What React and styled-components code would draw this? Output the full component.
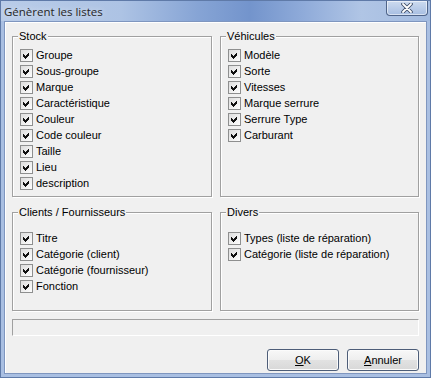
import React from 'react';
import styled, { createGlobalStyle } from 'styled-components';

const GlobalStyle = createGlobalStyle`
  html, body {
    margin: 0;
    padding: 0;
    background: #f0f0f0;
  }
  body {
    font-family: "Liberation Sans", Arial, sans-serif;
  }
`;

const Window = styled.div`
  width: 431px;
  height: 378px;
  box-sizing: border-box;
  display: flex;
  flex-direction: column;
  background: #a9bfe2;
  border: 1px solid #5f7aa8;
  overflow: hidden;
`;

const TitleBar = styled.div`
  height: 20px;
  flex: none;
  display: flex;
  align-items: center;
  justify-content: space-between;
  padding-left: 3px;
  background: linear-gradient(
    90deg,
    #b9cce8 0%,
    #adc3e4 28%,
    #86a4d5 46%,
    #7394cc 58%,
    #8eaad9 70%,
    #b0c5e5 84%,
    #a3bbe0 100%
  );
`;

const Title = styled.span`
  font-family: "Open Sans", "Noto Sans", sans-serif;
  font-size: 11.5px;
  color: #262626;
  text-shadow: 0 0 6px rgba(255, 255, 255, 0.7);
  margin-top: 1px;
`;

const CloseButton = styled.div`
  width: 42px;
  height: 15px;
  margin-top: -6px;
  margin-right: 2px;
  box-sizing: border-box;
  border: 1px solid #4f6489;
  border-top: none;
  border-radius: 0 0 4px 4px;
  background: linear-gradient(#cddbef, #a7bee2);
  box-shadow: inset 0 0 0 1px rgba(255, 255, 255, 0.55);
  display: flex;
  align-items: flex-end;
  justify-content: center;
  padding-bottom: 2px;
`;

const Client = styled.div`
  flex: 1;
  margin: 0 3px 3px 3px;
  box-sizing: border-box;
  background: #f0f0f0;
  border: 1px solid #7f96bf;
  box-shadow: inset 1px 1px 0 #ffffff;
  padding: 8px 7px 2px 7px;
  display: flex;
  flex-direction: column;
`;

const GroupGrid = styled.div`
  display: grid;
  grid-template-columns: 200px 199px;
  column-gap: 8px;
  row-gap: 9px;
`;

const Group = styled.fieldset`
  margin: 0;
  min-width: 0;
  box-sizing: border-box;
  height: ${(p) => p.$height}px;
  padding: ${(p) => p.$padTop}px 6px 0 7px;
  border: 1px solid #a0a0a0;
  box-shadow: inset 1px 1px 0 #ffffff, 1px 1px 0 #ffffff;
`;

const Legend = styled.legend`
  font-size: 11px;
  line-height: 13px;
  color: #000;
  padding: 0 1px;
  margin-left: -2px;
  background: #f0f0f0;
`;

const Row = styled.label`
  display: flex;
  align-items: center;
  height: 16px;
  gap: 3px;
  font-size: 11px;
  color: #000;
  white-space: nowrap;
`;

const StatusPanel = styled.div`
  margin-top: 8px;
  height: 17px;
  box-sizing: border-box;
  border-top: 1px solid #a0a0a0;
  border-left: 1px solid #a0a0a0;
  border-right: 1px solid #ffffff;
  border-bottom: 1px solid #ffffff;
`;

const ButtonBar = styled.div`
  margin-top: auto;
  display: flex;
  justify-content: flex-end;
  gap: 8px;
`;

const Button = styled.button`
  width: 72px;
  height: 22px;
  box-sizing: border-box;
  font-family: "Liberation Sans", Arial, sans-serif;
  font-size: 11px;
  color: #000;
  border: 1px solid #4d5d78;
  border-radius: 3px;
  background: linear-gradient(#f8f8f8 0%, #eeeeee 50%, #e2e2e2 51%, #d8d8d8 100%);
  box-shadow: inset 0 0 0 1px #fbfbfb;
  padding: 0;
  u {
    text-decoration: underline;
  }
`;

function CheckMark() {
  return (
    <svg width="13" height="13" viewBox="0 0 13 13" style={{ flex: 'none' }}>
      <defs>
        <linearGradient id="cbg" x1="0" y1="0" x2="1" y2="1">
          <stop offset="0" stopColor="#dcdcdc" />
          <stop offset="1" stopColor="#ffffff" />
        </linearGradient>
      </defs>
      <rect x="0.5" y="0.5" width="12" height="12" fill="url(#cbg)" stroke="#8e8f8f" />
      <path
        d="M3 5 L5 7 L9 3 L9 6 L5 10 L3 8 Z"
        fill="#111"
        shapeRendering="crispEdges"
      />
    </svg>
  );
}

function CloseGlyph() {
  return (
    <svg width="14" height="10" viewBox="0 0 14 10">
      <path
        d="M3 1 L11 9 M11 1 L3 9"
        stroke="#3d4c66"
        strokeWidth="3.6"
        fill="none"
        strokeLinecap="round"
      />
      <path
        d="M3 1 L11 9 M11 1 L3 9"
        stroke="#ffffff"
        strokeWidth="1.8"
        fill="none"
        strokeLinecap="round"
      />
    </svg>
  );
}

const groups = [
  {
    title: 'Stock',
    height: 167,
    padTop: 4,
    items: ['Groupe', 'Sous-groupe', 'Marque', 'Caractéristique', 'Couleur', 'Code couleur', 'Taille', 'Lieu', 'description'],
  },
  {
    title: 'Véhicules',
    height: 167,
    padTop: 4,
    items: ['Modèle', 'Sorte', 'Vitesses', 'Marque serrure', 'Serrure Type', 'Carburant'],
  },
  {
    title: 'Clients / Fournisseurs',
    height: 105,
    padTop: 11,
    items: ['Titre', 'Catégorie (client)', 'Catégorie (fournisseur)', 'Fonction'],
  },
  {
    title: 'Divers',
    height: 105,
    padTop: 11,
    items: ['Types (liste de réparation)', 'Catégorie (liste de réparation)'],
  },
];

export default function App() {
  return (
    <>
      <GlobalStyle />
      <Window>
        <TitleBar>
          <Title>Génèrent les listes</Title>
          <CloseButton>
            <CloseGlyph />
          </CloseButton>
        </TitleBar>
        <Client>
          <GroupGrid>
            {groups.map((g) => (
              <Group key={g.title} $height={g.height} $padTop={g.padTop}>
                <Legend>{g.title}</Legend>
                {g.items.map((item) => (
                  <Row key={item}>
                    <CheckMark />
                    {item}
                  </Row>
                ))}
              </Group>
            ))}
          </GroupGrid>
          <StatusPanel />
          <ButtonBar>
            <Button>
              <u>O</u>K
            </Button>
            <Button>
              <u>A</u>nnuler
            </Button>
          </ButtonBar>
        </Client>
      </Window>
    </>
  );
}
